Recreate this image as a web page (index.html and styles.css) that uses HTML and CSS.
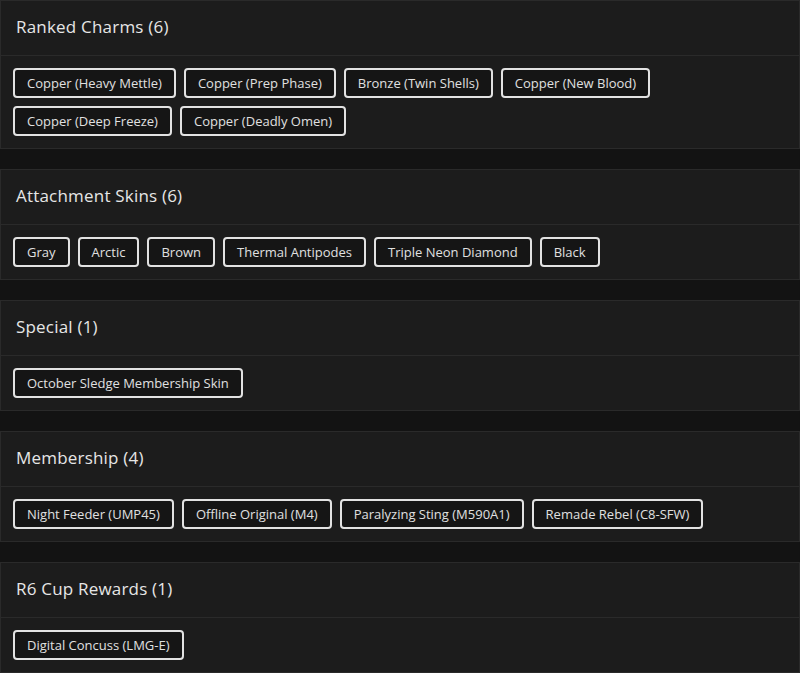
FILE: index.html
```html
<!DOCTYPE html>
<html lang="en">
<head>
  <meta charset="UTF-8">
  <meta name="viewport" content="width=device-width, initial-scale=1.0">
  <title>Items</title>
  <link rel="stylesheet" href="styles.css">
</head>
<body>
  <div class="card">
    <div class="card-head">Ranked Charms (6)</div>
    <div class="card-body">
      <span class="chip">Copper (Heavy Mettle)</span>
      <span class="chip">Copper (Prep Phase)</span>
      <span class="chip">Bronze (Twin Shells)</span>
      <span class="chip">Copper (New Blood)</span>
      <span class="chip">Copper (Deep Freeze)</span>
      <span class="chip">Copper (Deadly Omen)</span>
    </div>
  </div>

  <div class="card">
    <div class="card-head">Attachment Skins (6)</div>
    <div class="card-body">
      <span class="chip">Gray</span>
      <span class="chip">Arctic</span>
      <span class="chip">Brown</span>
      <span class="chip">Thermal Antipodes</span>
      <span class="chip">Triple Neon Diamond</span>
      <span class="chip">Black</span>
    </div>
  </div>

  <div class="card">
    <div class="card-head">Special (1)</div>
    <div class="card-body">
      <span class="chip">October Sledge Membership Skin</span>
    </div>
  </div>

  <div class="card">
    <div class="card-head">Membership (4)</div>
    <div class="card-body">
      <span class="chip">Night Feeder (UMP45)</span>
      <span class="chip">Offline Original (M4)</span>
      <span class="chip">Paralyzing Sting (M590A1)</span>
      <span class="chip">Remade Rebel (C8-SFW)</span>
    </div>
  </div>

  <div class="card">
    <div class="card-head">R6 Cup Rewards (1)</div>
    <div class="card-body">
      <span class="chip">Digital Concuss (LMG-E)</span>
    </div>
  </div>
</body>
</html>
```

FILE: styles.css
```css
body {
  margin: 0;
  background: #131313;
  color: #e6e6e6;
  font-family: "Open Sans", sans-serif;
}
.card {
  background: #1c1c1c;
  border: 1px solid #2a2a2a;
  margin-bottom: 20px;
}
.card-head {
  padding: 15px 15px 17px;
  font-size: 17px;
  line-height: 22px;
  font-weight: 500;
  letter-spacing: 0.2px;
  border-bottom: 1px solid #2a2a2a;
}
.card-body {
  display: flex;
  flex-wrap: wrap;
  gap: 8px;
  padding: 12px;
}
.chip {
  display: inline-block;
  padding: 4px 12px;
  font-size: 13px;
  line-height: 18px;
  background: #151515;
  border: 2px solid #e2e2e2;
  border-radius: 4px;
  color: #e0e0e0;
}
```
